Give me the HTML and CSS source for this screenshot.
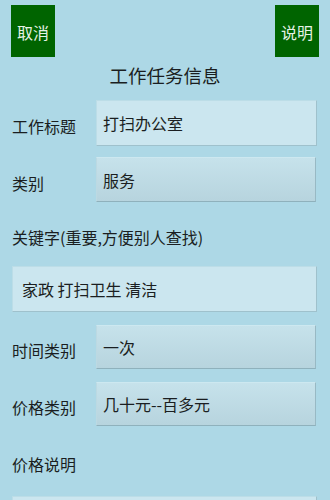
FILE: index.html
```html
<!DOCTYPE html>
<html lang="zh">
<head>
<meta charset="utf-8">
<link rel="stylesheet" href="styles.css">
</head>
<body>
<div class="page">
  <div class="topbar">
    <div class="btn">取消</div>
    <div class="btn">说明</div>
  </div>
  <div class="title">工作任务信息</div>

  <div class="row first">
    <div class="label">工作标题</div>
    <div class="field edit">打扫办公室</div>
  </div>
  <div class="row second">
    <div class="label">类别</div>
    <div class="field spin">服务</div>
  </div>

  <div class="block-label kw">关键字(重要,方便别人查找)</div>
  <div class="field edit wide">家政 打扫卫生 清洁</div>

  <div class="row r3">
    <div class="label">时间类别</div>
    <div class="field spin short">一次</div>
  </div>
  <div class="row r4">
    <div class="label">价格类别</div>
    <div class="field spin short">几十元--百多元</div>
  </div>

  <div class="block-label price">价格说明</div>
  <div class="field edit wide last"></div>
</div>
</body>
</html>
```

FILE: styles.css
```css
html, body {
  margin: 0;
  padding: 0;
  background: #add8e6;
  height: 100%;
  overflow: hidden;
}
body {
  font-family: "Noto Sans CJK SC", "Noto Sans", sans-serif;
  color: #1a1e21;
}
.page {
  padding: 5px 13px 0 12px;
}
.topbar {
  display: flex;
  justify-content: space-between;
  margin-left: -1px;
  margin-right: -2px;
}
.btn {
  width: 44px;
  height: 52px;
  background: #006400;
  color: #e6f2e6;
  font-size: 16px;
  display: flex;
  align-items: center;
  justify-content: center;
  padding-top: 1px;
  box-sizing: border-box;
}
.title {
  text-align: center;
  font-size: 18.5px;
  line-height: 24px;
  height: 24px;
  margin-top: 6px;
  padding-left: 1px;
}
.row {
  display: flex;
  align-items: center;
}
.row.first { margin-top: 13px; }
.row.second { margin-top: 11px; }
.row.r3 { margin-top: 13px; }
.row.r4 { margin-top: 13px; }
.label {
  width: 84px;
  flex: none;
  font-size: 16px;
  line-height: 24px;
  padding-top: 6px;
}
.field {
  flex: 1;
  height: 46px;
  box-sizing: border-box;
  font-size: 16px;
  line-height: 20px;
  display: flex;
  align-items: center;
  padding-left: 6px;
}
.edit {
  background: #cbe6ef;
  border-top: 1px solid #bcdde7;
  border-left: 1px solid #bcdde7;
  border-right: 1px solid #9fc1cc;
  border-bottom: 1px solid #9fc1cc;
}
.spin {
  height: 45px;
  background: linear-gradient(#c6e2eb, #b7d4de);
  border-top: 1px solid #cde8f0;
  border-left: 1px solid #bcd9e2;
  border-right: 1px solid #98b9c4;
  border-bottom: 1px solid #8fb1bc;
  margin-right: 1px;
}
.spin.short { height: 44px; }
.block-label {
  font-size: 16px;
  line-height: 24px;
  height: 24px;
}
.block-label.kw { margin-top: 23px; }
.field.wide {
  margin-top: 17px;
  padding-left: 9px;
  height: 46px;
}
.block-label.price { margin-top: 26px; }
.field.last { margin-top: 20px; }
```
